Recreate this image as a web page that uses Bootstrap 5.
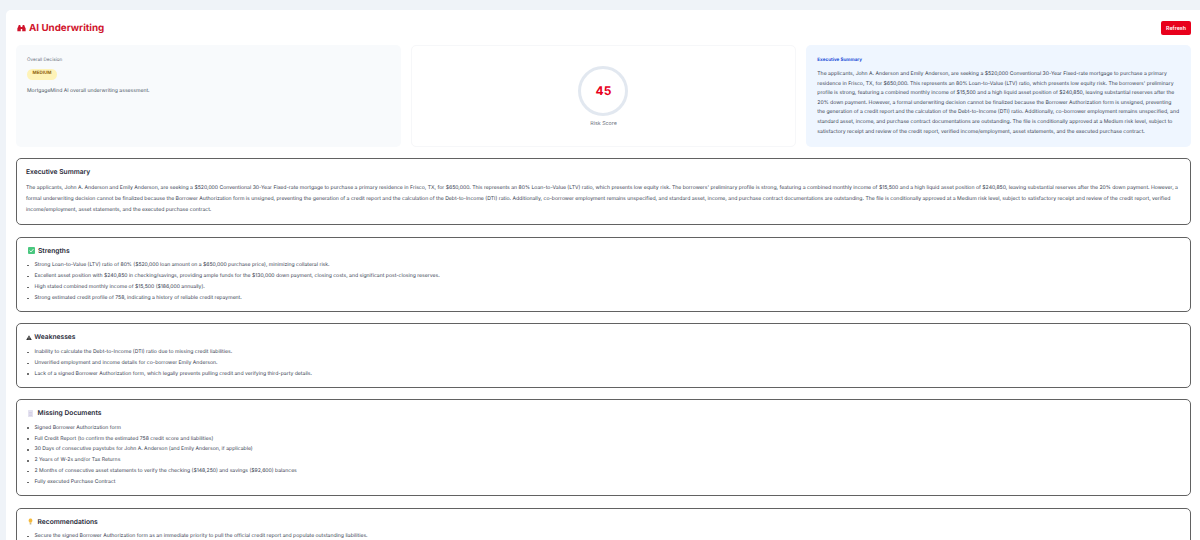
<!DOCTYPE html>
<html lang="en">
<head>
    <meta charset="UTF-8">
    <meta name="viewport" content="width=device-width, initial-scale=1.0">
    <title>AI Underwriting</title>
    <link href="https://cdn.jsdelivr.net/npm/bootstrap@5.3.3/dist/css/bootstrap.min.css" rel="stylesheet">
    <style>
        html, body {
            height: 540px;
            overflow: hidden;
        }
        body {
            background-color: #eff3f8;
            font-family: Inter, "Liberation Sans", sans-serif;
            color: #374151;
            text-rendering: geometricPrecision;
        }
        .page-wrap {
            padding: 10px 0 0 6px;
        }
        .main-panel {
            background: #fff;
            border-radius: 5px 0 0 0;
            padding: 11px 9px 0 10px;
        }
        .page-title {
            font-size: 9.8px;
            font-weight: 700;
            color: #d0142c;
            line-height: 13px;
            margin: 0;
        }
        .title-ico {
            margin: 0 3px 0 1px;
        }
        .refresh-btn {
            background: #e8001c;
            color: #fff;
            border: 0;
            border-radius: 2px;
            font-size: 5.3px;
            font-weight: 600;
            width: 30px;
            height: 14px;
            padding: 0;
            line-height: 14px;
        }
        .head-row {
            height: 14px;
            margin-bottom: 10px;
        }
        .top-grid {
            display: grid;
            grid-template-columns: repeat(3, 1fr);
            grid-template-rows: 102px;
            gap: 10.5px;
            height: 102px;
            margin-bottom: 11.3px;
        }
        .top-box {
            border-radius: 5px;
            padding: 12px 11px 0;
        }
        .box-grey { background: #f8fafc; }
        .box-plain { background: #fff; border: 1px solid #f6f7f9; padding-top: 11px; }
        .box-blue { background: #eff6ff; }
        .small-label {
            font-size: 4.6px;
            line-height: 7px;
            color: #6b7280;
        }
        .risk-pill {
            width: 30px;
            background: #fef3b8;
            color: #92650e;
            font-size: 4.5px;
            font-weight: 700;
            line-height: 10.5px;
            text-align: center;
            border-radius: 5.25px;
            margin-top: 5px;
        }
        .assess-text {
            font-size: 5.1px;
            line-height: 8px;
            color: #4b5563;
            margin: 7px 0 0;
        }
        .score-ring {
            width: 50px;
            height: 50px;
            border: 3px solid #e2e8f0;
            border-radius: 50%;
            color: #e8001c;
            font-size: 12px;
            font-weight: 700;
            margin-top: 9px;
        }
        .ring-label {
            font-size: 5.3px;
            line-height: 8px;
            color: #6b7280;
            margin-top: 4px;
        }
        .summary-label {
            font-size: 4.6px;
            font-weight: 700;
            line-height: 7px;
            color: #1d4ed8;
            margin-bottom: 6px;
        }
        .summary-text {
            font-size: 5.1px;
            line-height: 9.6px;
            color: #374151;
            margin: 0;
        }
        .info-block {
            border: 1px solid #626262;
            border-radius: 5px;
            padding: 8px 9px;
            margin-bottom: 11.5px;
            background: #fff;
        }
        .list-block {
            padding-bottom: 7px;
        }
        .block-title {
            font-size: 6.7px;
            font-weight: 600;
            line-height: 10px;
            color: #1f2937;
            margin: 0 0 5.5px;
        }
        .block-title svg {
            flex: none;
        }
        .list-title {
            margin-bottom: 4.5px;
        }
        .ico-strength { margin: 0 3.5px 0 1.5px; }
        .ico-warn { margin: 0 2px 0 .3px; }
        .ico-doc { margin: 0 4.5px 0 2px; }
        .block-text {
            font-size: 5.13px;
            line-height: 11px;
            color: #374151;
            margin: 0 0 .5px;
        }
        .block-list {
            list-style: none;
            margin: 0;
            padding: 0;
            font-size: 5.1px;
            line-height: 10.9px;
            color: #374151;
        }
        .block-list li {
            position: relative;
            padding-left: 8.5px;
        }
        .block-list li::before {
            content: "";
            position: absolute;
            left: 1px;
            top: 4.7px;
            width: 1.5px;
            height: 1.5px;
            border-radius: 50%;
            background: #555;
        }
    </style>
</head>
<body>
    <div class="page-wrap">
        <div class="main-panel">
            <div class="head-row d-flex justify-content-between align-items-center">
                <h1 class="page-title d-flex align-items-center">
                    <svg class="title-ico" width="9" height="8" viewBox="0 0 10 8" fill="#d0142c"><path d="M1.200 3 2 .6h1.600L4.200 3v4.600H.4V4.200zM8.800 3 8 .6H6.400L5.800 3v4.600h3.800V4.200zM4.200 3h1.600v2H4.200z"/></svg>
                    AI Underwriting
                </h1>
                <button class="refresh-btn" type="button">Refresh</button>
            </div>

            <div class="top-grid">
                <div class="top-box box-grey">
                    <div class="small-label">Overall Decision</div>
                    <div class="risk-pill">MEDIUM</div>
                    <p class="assess-text">MortgageMind AI overall underwriting assessment.</p>
                </div>
                <div class="top-box box-plain d-flex flex-column align-items-center">
                    <div class="score-ring d-flex align-items-center justify-content-center">45</div>
                    <div class="ring-label">Risk Score</div>
                </div>
                <div class="top-box box-blue">
                    <div class="summary-label">Executive Summary</div>
                    <p class="summary-text">The applicants, John A. Anderson and Emily Anderson, are seeking a $520,000 Conventional 30-Year Fixed-rate mortgage to purchase a primary residence in Frisco, TX, for $650,000. This represents an 80% Loan-to-Value (LTV) ratio, which presents low equity risk. The borrowers' preliminary profile is strong, featuring a combined monthly income of $15,500 and a high liquid asset position of $240,850, leaving substantial reserves after the 20% down payment. However, a formal underwriting decision cannot be finalized because the Borrower Authorization form is unsigned, preventing the generation of a credit report and the calculation of the Debt-to-Income (DTI) ratio. Additionally, co-borrower employment remains unspecified, and standard asset, income, and purchase contract documentations are outstanding. The file is conditionally approved at a Medium risk level, subject to satisfactory receipt and review of the credit report, verified income/employment, asset statements, and the executed purchase contract.</p>
                </div>
            </div>

            <div class="info-block">
                <h2 class="block-title">Executive Summary</h2>
                <p class="block-text">The applicants, John A. Anderson and Emily Anderson, are seeking a $520,000 Conventional 30-Year Fixed-rate mortgage to purchase a primary residence in Frisco, TX, for $650,000. This represents an 80% Loan-to-Value (LTV) ratio, which presents low equity risk. The borrowers' preliminary profile is strong, featuring a combined monthly income of $15,500 and a high liquid asset position of $240,850, leaving substantial reserves after the 20% down payment. However, a formal underwriting decision cannot be finalized because the Borrower Authorization form is unsigned, preventing the generation of a credit report and the calculation of the Debt-to-Income (DTI) ratio. Additionally, co-borrower employment remains unspecified, and standard asset, income, and purchase contract documentations are outstanding. The file is conditionally approved at a Medium risk level, subject to satisfactory receipt and review of the credit report, verified income/employment, asset statements, and the executed purchase contract.</p>
            </div>

            <div class="info-block list-block">
                <h2 class="block-title list-title d-flex align-items-center">
                    <svg class="ico-strength" width="7" height="7" viewBox="0 0 7 7"><rect width="7" height="7" rx="1" fill="#4ac77f"/><path d="M1.600 3.600 3 5l2.500-3" fill="none" stroke="#fff" stroke-width=".8"/></svg>
                    Strengths
                </h2>
                <ul class="block-list">
                    <li>Strong Loan-to-Value (LTV) ratio of 80% ($520,000 loan amount on a $650,000 purchase price), minimizing collateral risk.</li>
                    <li>Excellent asset position with $240,850 in checking/savings, providing ample funds for the $130,000 down payment, closing costs, and significant post-closing reserves.</li>
                    <li>High stated combined monthly income of $15,500 ($186,000 annually).</li>
                    <li>Strong estimated credit profile of 758, indicating a history of reliable credit repayment.</li>
                </ul>
            </div>

            <div class="info-block list-block">
                <h2 class="block-title list-title d-flex align-items-center">
                    <svg class="ico-warn" width="6" height="5.500" viewBox="0 0 7 6"><path d="M3.500 0 7 6H0z" fill="#333"/><path d="M3.500 2v2M3.500 4.500v.6" stroke="#fff" stroke-width=".6"/></svg>
                    Weaknesses
                </h2>
                <ul class="block-list">
                    <li>Inability to calculate the Debt-to-Income (DTI) ratio due to missing credit liabilities.</li>
                    <li>Unverified employment and income details for co-borrower Emily Anderson.</li>
                    <li>Lack of a signed Borrower Authorization form, which legally prevents pulling credit and verifying third-party details.</li>
                </ul>
            </div>

            <div class="info-block list-block">
                <h2 class="block-title list-title d-flex align-items-center">
                    <svg class="ico-doc" width="5" height="7" viewBox="0 0 5 7"><rect width="5" height="7" rx=".5" fill="#e4e2f0"/><path d="M1 2.500h3M1 4h3M1 5.500h3" stroke="#bdb9d4" stroke-width=".4"/></svg>
                    Missing Documents
                </h2>
                <ul class="block-list">
                    <li>Signed Borrower Authorization form</li>
                    <li>Full Credit Report (to confirm the estimated 758 credit score and liabilities)</li>
                    <li>30 Days of consecutive paystubs for John A. Anderson (and Emily Anderson, if applicable)</li>
                    <li>2 Years of W-2s and/or Tax Returns</li>
                    <li>2 Months of consecutive asset statements to verify the checking ($148,250) and savings ($92,600) balances</li>
                    <li>Fully executed Purchase Contract</li>
                </ul>
            </div>

            <div class="info-block list-block">
                <h2 class="block-title list-title d-flex align-items-center">
                    <svg class="ico-doc" width="5" height="7" viewBox="0 0 6 7"><path d="M3 0a2.300 2.300 0 0 0-1.300 4.200V5h2.600v-.8A2.300 2.300 0 0 0 3 0z" fill="#f5b93a"/><rect x="2" y="5.500" width="2" height="1.500" fill="#b9a77a"/></svg>
                    Recommendations
                </h2>
                <ul class="block-list">
                    <li>Secure the signed Borrower Authorization form as an immediate priority to pull the official credit report and populate outstanding liabilities.</li>
                </ul>
            </div>
        </div>
    </div>
    <script src="https://cdn.jsdelivr.net/npm/bootstrap@5.3.3/dist/js/bootstrap.bundle.min.js"></script>
</body>
</html>
